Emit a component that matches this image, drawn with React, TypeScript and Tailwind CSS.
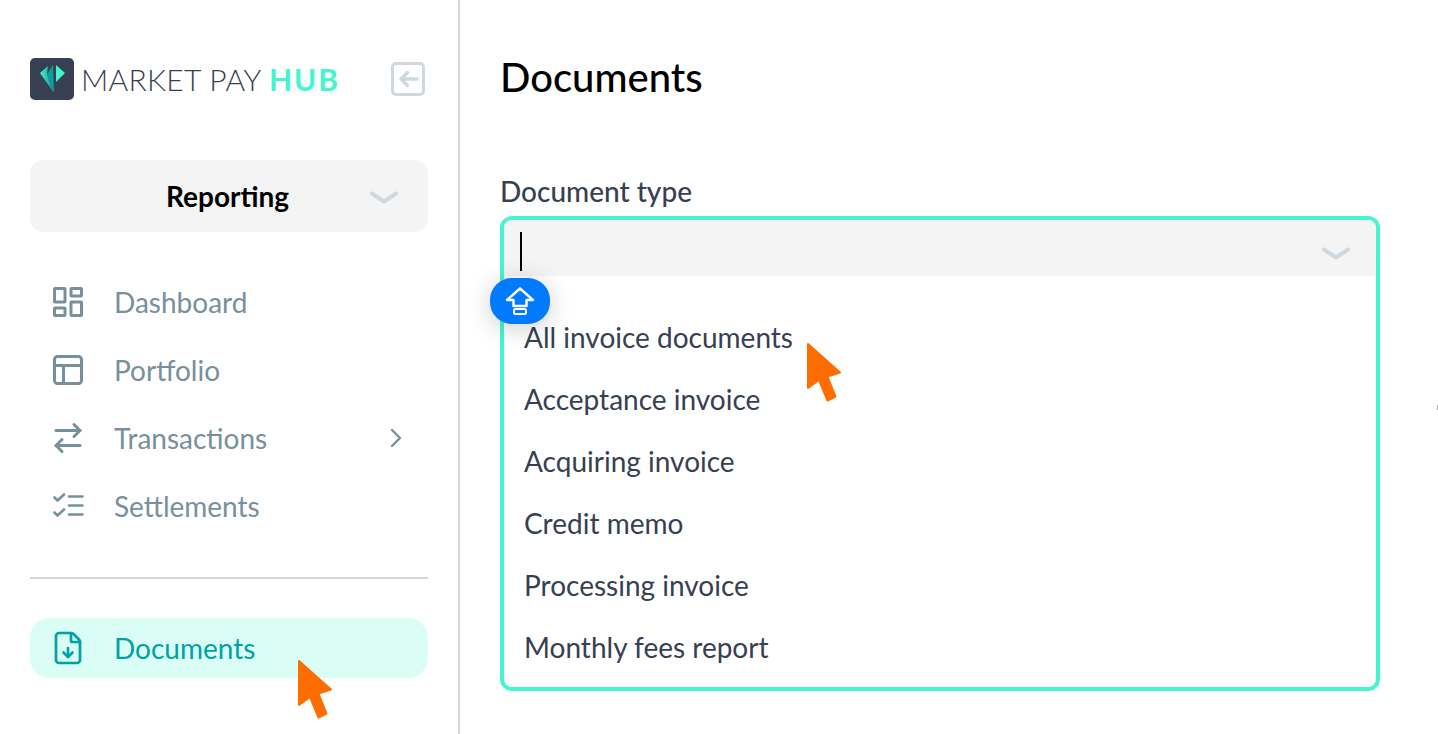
import { ArrowRightLeft, ChevronRight, FileDown, PanelsTopLeft } from "lucide-react";

function DashboardIcon({ className }: { className?: string }) {
  return (
    <svg width="36" height="36" viewBox="0 0 36 36" fill="none" stroke="currentColor" strokeWidth="3" strokeLinejoin="round" className={className}>
      <rect x="4.5" y="4.5" width="10.5" height="13.5" rx="0.5" />
      <rect x="21" y="4.5" width="10.5" height="7.5" rx="0.5" />
      <rect x="21" y="18" width="10.5" height="13.5" rx="0.5" />
      <rect x="4.5" y="24" width="10.5" height="7.5" rx="0.5" />
    </svg>
  );
}

function SettlementsIcon({ className }: { className?: string }) {
  return (
    <svg width="36" height="36" viewBox="0 0 36 36" fill="none" stroke="currentColor" strokeWidth="2.6" strokeLinecap="round" strokeLinejoin="round" className={className}>
      <path d="M4.5 9.5 L7.5 12.5 L14 6.5" />
      <path d="M4.5 24.5 L7.5 27.5 L14 21.5" />
      <path d="M19 8.5 H32.5 M19 17.5 H32.5 M19 26.5 H32.5" />
    </svg>
  );
}

const navItems = [
  { label: "Dashboard", icon: DashboardIcon },
  { label: "Portfolio", icon: PanelsTopLeft },
  { label: "Transactions", icon: ArrowRightLeft, arrow: true },
  { label: "Settlements", icon: SettlementsIcon },
];

const documentTypes = [
  "All invoice documents",
  "Acceptance invoice",
  "Acquiring invoice",
  "Credit memo",
  "Processing invoice",
  "Monthly fees report",
];

function Chevron({ className }: { className?: string }) {
  return (
    <svg width="32" height="16" viewBox="0 0 32 16" fill="none" className={className}>
      <path d="M4 3.5 L16 11.5 L28 3.5" stroke="#cfd8dc" strokeWidth="4" strokeLinecap="round" strokeLinejoin="round" />
    </svg>
  );
}

// orange pointer drawn over the page
function Pointer({ className }: { className: string }) {
  return (
    <svg width="36" height="60" viewBox="0 0 36 60" className={className}>
      <path
        d="M1 1 L33 29.5 L20.5 33.5 L28.5 53.5 L20.5 57.5 L12 37 L1 45 Z"
        fill="#ff6d00"
        stroke="#ff6d00"
        strokeWidth="2"
        strokeLinejoin="round"
      />
    </svg>
  );
}

function Logo() {
  return (
    <div className="flex items-center">
      <div className="w-[44px] h-[42px] rounded-[5px] bg-[#373f53] shrink-0">
        <svg width="44" height="42" viewBox="0 0 44 42">
          <defs>
            <linearGradient id="gem" x1="0" y1="0" x2="1" y2="0">
              <stop offset="0" stopColor="#45f5cf" />
              <stop offset="1" stopColor="#0b8f8f" />
            </linearGradient>
          </defs>
          <path d="M10 15 L18 8 L17 16 L24 35 Z" fill="url(#gem)" />
          <path d="M23 7 L24 35 L17 16 Z" fill="#109c98" />
          <path d="M26 7 L35 15 L26 24 Z" fill="#45f5cf" />
        </svg>
      </div>
      <span className="ml-[7px] text-[30px] leading-none font-light tracking-[0.3px] text-[#373f53] whitespace-nowrap">
        MARKET PAY <span className="font-bold tracking-[2px] text-[#45f5cf]">HUB</span>
      </span>
    </div>
  );
}

function Sidebar() {
  return (
    <aside className="w-[460px] h-full shrink-0 border-r-[2px] border-[#cfd8dc] px-[30px] pt-[58px]">
      <div className="flex items-center justify-between pr-[2px]">
        <Logo />
        <svg width="36" height="36" viewBox="0 0 36 36" fill="none">
          <rect x="2.5" y="2.5" width="31" height="31" rx="3.5" stroke="#cfd8dc" strokeWidth="3" />
          <path d="M27 18 H11 M17.5 11.5 L11 18 L17.5 24.5" stroke="#cfd8dc" strokeWidth="3.5" strokeLinecap="round" strokeLinejoin="round" />
        </svg>
      </div>

      <div className="mt-[60px] h-[72px] rounded-[14px] bg-[#f4f4f4] flex items-center justify-between pl-[136px] pr-[28px]">
        <span className="text-[28px] font-bold text-black">Reporting</span>
        <Chevron className="shrink-0 mt-[4px]" />
      </div>

      <nav className="mt-[36px]">
        {navItems.map((item) => (
          <div key={item.label} className="h-[68px] flex items-center pl-[20px] text-[28px] text-[#78909c]">
            <item.icon size={36} strokeWidth={2} className="shrink-0" />
            <span className="ml-[28px]">{item.label}</span>
            {item.arrow && <ChevronRight size={32} strokeWidth={1.8} className="ml-auto mr-[16px]" />}
          </div>
        ))}
      </nav>

      <div className="mt-[37px] h-[2px] bg-[#cfd8dc]" />

      <div className="mt-[39px] h-[60px] rounded-[20px] bg-[#dafdf6] flex items-center pl-[20px] text-[28px] text-[#00a3a3]">
        <FileDown size={36} strokeWidth={1.8} className="shrink-0" />
        <span className="ml-[28px]">Documents</span>
      </div>
    </aside>
  );
}

function DocumentSelect() {
  return (
    <div className="mt-[7px] w-[880px] h-[475px] rounded-[12px] border-[4px] border-[#45f5cf] overflow-hidden">
      <div className="h-[56px] bg-[#f4f4f4] flex items-center justify-between pl-[16px] pr-[24px]">
        <div className="w-[2px] h-[39px] mt-[7px] bg-black" />
        <Chevron className="shrink-0 mt-[11px]" />
      </div>
      <ul className="pt-[30px]">
        {documentTypes.map((type) => (
          <li key={type} className="h-[62px] flex items-center pl-[20px] text-[28px] text-[#373f53]">
            {type}
          </li>
        ))}
      </ul>
    </div>
  );
}

export default function App() {
  return (
    <div className="relative w-[1438px] h-[734px] overflow-hidden bg-white flex font-['Lato',sans-serif]">
      <Sidebar />
      <main className="flex-1 pl-[40px] pt-[53px]">
        <h1 className="text-[40px] leading-[48px] font-medium text-black">Documents</h1>
        <label className="block mt-[72px] text-[28px] leading-[36px] font-medium text-[#373f53]">
          Document type
        </label>
        <DocumentSelect />
      </main>

      <div className="absolute left-[490px] top-[278px] w-[60px] h-[46px] rounded-[22px] bg-[#007aff] flex items-center justify-center shadow-[0_4px_24px_rgba(0,0,0,0.2)]">
        <svg width="30" height="30" viewBox="0 0 30 30" fill="none">
          <path d="M15 2.5 L28 14 H21.5 V20 H8.5 V14 H2 Z" stroke="white" strokeWidth="2.4" strokeLinejoin="round" />
          <rect x="9" y="23" width="12" height="5" rx="1.5" stroke="white" strokeWidth="2" />
        </svg>
      </div>

      <Pointer className="absolute left-[298px] top-[660px]" />
      <Pointer className="absolute left-[807px] top-[343px]" />
      <div className="absolute left-[1437px] top-[405px] w-[1px] h-[5px] bg-[#9aa5ad]" />
    </div>
  );
}
